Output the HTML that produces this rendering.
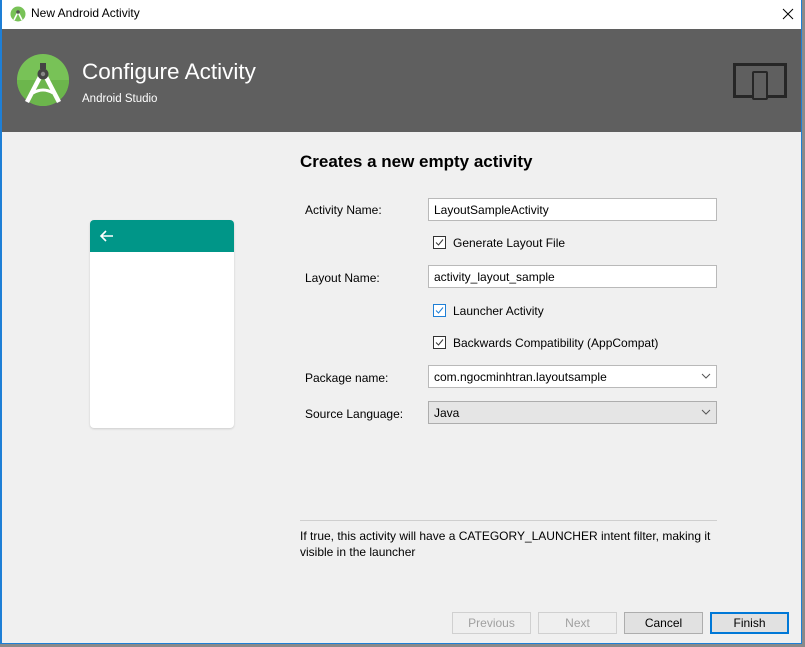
<!DOCTYPE html>
<html><head><meta charset="utf-8"><style>
*{margin:0;padding:0;box-sizing:border-box}
body{width:805px;height:647px;overflow:hidden;background:#8a8a8a;font-family:"Liberation Sans",sans-serif;font-size:12px;color:#000;position:relative}
.a{position:absolute}
.win{left:0;top:0;width:802px;height:644px;background:#f0f0f0;border-left:2px solid #1e7fd6;border-right:1px solid #1e7fd6;border-bottom:1px solid #1e7fd6}
.inp{background:#fff;border:1px solid #b9b9b9;height:23px;line-height:22px;padding-left:5px;font-size:12px}
.cb{width:13px;height:13px;border:1px solid #333;background:#fff}
.btn{height:22px;border:1px solid #adadad;background:#e1e1e1;text-align:center;line-height:20px;font-size:12px}
.lbl{font-size:12px}
</style></head><body>
<div class="a win"></div>
<div class="a" style="left:2px;top:0;width:799px;height:29px;background:#fff"></div>
<svg class="a" style="left:10px;top:6px" width="16" height="16" viewBox="0 0 16 16"><circle cx="8" cy="8" r="7.5" fill="#78c257"/><path d="M4 14 L8 6 L12 14" stroke="#fff" stroke-width="1.6" fill="none"/><circle cx="8" cy="6" r="1.8" fill="#555"/></svg>
<div class="a" style="left:31px;top:6px;font-size:12px">New Android Activity</div>
<svg class="a" style="left:781px;top:7px" width="14" height="14" viewBox="0 0 14 14"><path d="M2 2L12 12M12 2L2 12" stroke="#000" stroke-width="1"/></svg>
<div class="a" style="left:2px;top:29px;width:799px;height:103px;background:#5f5f5f"></div>
<svg class="a" style="left:16px;top:53px" width="54" height="54" viewBox="0 0 54 54"><circle cx="27" cy="27" r="26" fill="#78c257"/><path d="M1 27 A26 26 0 0 0 53 27Z" fill="#6cb64c"/><path d="M11 49 L24 24 M43 49 L30 24" stroke="#fff" stroke-width="4.5"/><path d="M17 40 Q27 34 37 40" stroke="#fff" stroke-width="3" fill="none"/><rect x="24" y="10" width="6" height="6" fill="#444"/><circle cx="27" cy="21" r="5.5" fill="#444"/><circle cx="27" cy="21" r="2.2" fill="#888"/></svg>
<div class="a" style="left:82px;top:59px;font-size:22.5px;color:#fff">Configure Activity</div>
<div class="a" style="left:82px;top:93px;font-size:11.5px;color:#fff">Android Studio</div>
<div class="a" style="left:733px;top:63px;width:54px;height:35px;border:3px solid #262626"></div>
<div class="a" style="left:752px;top:71px;width:16px;height:29px;border:2px solid #262626;background:#5f5f5f;border-radius:2px"></div>
<div class="a" style="left:90px;top:220px;width:144px;height:208px;background:#fff;border-radius:4px;box-shadow:0 1px 2px rgba(0,0,0,.15);overflow:hidden"><div style="height:32px;background:#009688"></div></div>
<svg class="a" style="left:99px;top:229px" width="16" height="14" viewBox="0 0 16 14"><path d="M14 7H2M7 2L2 7L7 12" stroke="#fff" stroke-width="1.6" fill="none"/></svg>
<div class="a" style="left:300px;top:152px;font-size:17px;font-weight:bold">Creates a new empty activity</div>
<div class="a lbl" style="left:305px;top:203px">Activity Name:</div>
<div class="a inp" style="left:428px;top:198px;width:289px">LayoutSampleActivity</div>
<div class="a cb" style="left:433px;top:236px"></div><svg class="a" style="left:433px;top:236px" width="13" height="13"><path d="M3 6.5L5.5 9L10 3.5" stroke="#333" fill="none"/></svg>
<div class="a lbl" style="left:453px;top:236px">Generate Layout File</div>
<div class="a lbl" style="left:305px;top:271px">Layout Name:</div>
<div class="a inp" style="left:428px;top:265px;width:289px">activity_layout_sample</div>
<div class="a cb" style="left:433px;top:304px;border-color:#1e7fd6"></div><svg class="a" style="left:433px;top:304px" width="13" height="13"><path d="M3 6.5L5.5 9L10 3.5" stroke="#1e7fd6" fill="none"/></svg>
<div class="a lbl" style="left:453px;top:304px">Launcher Activity</div>
<div class="a cb" style="left:433px;top:336px"></div><svg class="a" style="left:433px;top:336px" width="13" height="13"><path d="M3 6.5L5.5 9L10 3.5" stroke="#333" fill="none"/></svg>
<div class="a lbl" style="left:453px;top:336px">Backwards Compatibility (AppCompat)</div>
<div class="a lbl" style="left:305px;top:371px">Package name:</div>
<div class="a inp" style="left:428px;top:365px;width:289px">com.ngocminhtran.layoutsample</div>
<div class="a lbl" style="left:305px;top:407px">Source Language:</div>
<div class="a inp" style="left:428px;top:401px;width:289px;background:#e5e5e5;border-color:#adadad">Java</div>
<svg class="a" style="left:701px;top:372px" width="10" height="8" viewBox="0 0 10 8"><path d="M1 2L5 6L9 2" stroke="#555" fill="none"/></svg>
<svg class="a" style="left:701px;top:408px" width="10" height="8" viewBox="0 0 10 8"><path d="M1 2L5 6L9 2" stroke="#555" fill="none"/></svg>
<div class="a" style="left:300px;top:520px;width:417px;height:1px;background:#cfcfcf"></div>
<div class="a lbl" style="left:300px;top:528px;line-height:16px;width:420px">If true, this activity will have a CATEGORY_LAUNCHER intent filter, making it visible in the launcher</div>
<div class="a btn" style="left:452px;top:612px;width:79px;color:#a0a0a0;border-color:#d0d0d0;background:#efefef">Previous</div>
<div class="a btn" style="left:538px;top:612px;width:79px;color:#a0a0a0;border-color:#d0d0d0;background:#efefef">Next</div>
<div class="a btn" style="left:624px;top:612px;width:79px">Cancel</div>
<div class="a btn" style="left:710px;top:612px;width:79px;border:2px solid #0078d7;line-height:18px">Finish</div>
</body></html>
